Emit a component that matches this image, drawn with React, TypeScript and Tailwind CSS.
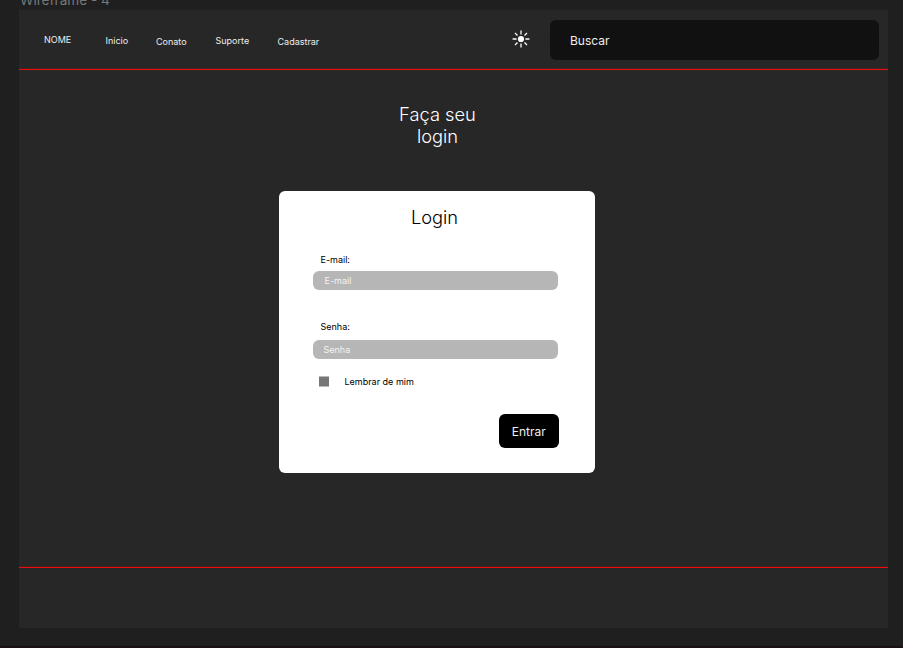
function Sun() {
  return (
    <svg className="block h-[18px] w-[18px]" viewBox="0 0 18 18" stroke="#fff" strokeWidth="1.3" fill="none">
      <circle cx="9" cy="9" r="3.1" fill="#fff" stroke="none" />
      <path d="M9 .6v3.8M9 13.6v3.8M.6 9h4M13.4 9h4M3 3l2.5 2.5M12.5 12.5L15 15M15 3l-2.5 2.5M5.5 12.5L3 15" />
    </svg>
  );
}

function Rule() {
  return <div className="h-[2px] shrink-0 border-t border-[#442020] bg-[#ee0c0c]" />;
}

export default function App() {
  return (
    <div className="flex h-[648px] w-[903px] flex-col overflow-hidden border-b-2 border-[#1a1114] bg-[#1f1f1f] font-['Inter',sans-serif]">
      <div className="flex h-[10px] shrink-0 items-end overflow-hidden pl-[20px] text-[13.6px] leading-[20px] text-[#777777]">
        <span className="whitespace-nowrap">Wireframe - 4</span>
      </div>
      <main className="ml-[19px] flex h-[618px] w-[869px] shrink-0 flex-col bg-[#272727]">
        <header className="flex h-[58px] shrink-0 items-start text-white">
          <nav className="flex w-[493px] shrink-0 whitespace-nowrap pl-[25px] text-[9px] leading-[12px] text-[#eeeeee]">
            <a className="mt-[24px] w-[61.5px]">NOME</a>
            <a className="mt-[25px] w-[50.5px]">Inicio</a>
            <a className="mt-[26px] w-[59.5px]">Conato</a>
            <a className="mt-[25px] w-[62px]">Suporte</a>
            <a className="mt-[26px]">Cadastrar</a>
          </nav>
          <button className="mt-[20px]"><Sun /></button>
          <div className="ml-[20px] mt-[9.5px] flex h-[40px] w-[329px] items-center rounded-[6px] bg-[#111111] pl-[20px] pt-[3px] text-[12px] text-[#eeeeee]">Buscar</div>
        </header>
        <Rule />
        <section className="flex h-[496px] shrink-0 flex-col items-center">
          <h1 className="mt-[33px] w-[100px] -translate-x-[16px] text-center text-[18.3px] font-light leading-[22px] text-white">Faça seu login</h1>
          <form className="mt-[44px] flex h-[282px] w-[316px] -translate-x-[17px] flex-col rounded-[6px] bg-white text-[9px] leading-[12px] text-black">
            <h2 className="mt-[15px] pr-[4px] text-center text-[18.3px] font-light leading-[22px]">Login</h2>
            <label className="ml-[42px] mt-[26px]">E-mail:</label>
            <div className="ml-[34.5px] mt-[5px] flex h-[19px] w-[245px] items-center rounded-[6px] bg-[#b6b6b6] pl-[11.5px] text-[#f4f4f4]">E-mail</div>
            <label className="ml-[42px] mt-[31px]">Senha:</label>
            <div className="ml-[34.5px] mt-[7px] flex h-[19px] w-[245px] items-center rounded-[6px] bg-[#b6b6b6] pl-[10.5px] text-[#f4f4f4]">Senha</div>
            <div className="ml-[40.5px] mt-[17px] flex items-center">
              <span className="mr-[15.5px] h-[10px] w-[10px] -translate-y-[0.5px] bg-[#777777]" />
              Lembrar de mim
            </div>
            <button className="ml-[220px] mt-[26px] h-[34px] w-[60.5px] rounded-[6px] bg-black pt-px text-[12px] text-[#eeeeee]">Entrar</button>
          </form>
        </section>
        <Rule />
        <footer className="grow" />
      </main>
    </div>
  );
}
